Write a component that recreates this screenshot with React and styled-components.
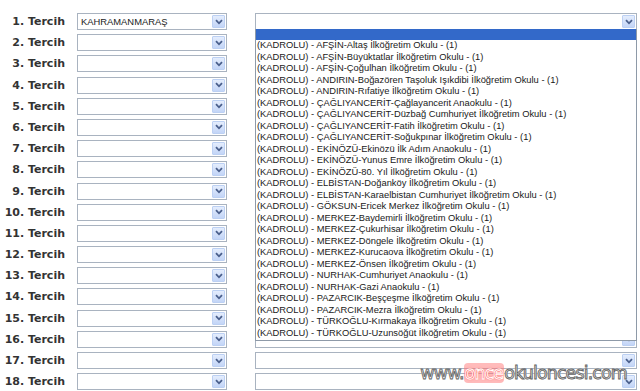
import React from 'react';
import styled, { createGlobalStyle } from 'styled-components';

const GlobalStyle = createGlobalStyle`
  html, body {
    margin: 0;
    padding: 0;
    background: #fff;
  }
  body {
    width: 640px;
    height: 391px;
    overflow: hidden;
    font-family: 'Liberation Sans', Arial, sans-serif;
  }
`;

const Page = styled.div`
  position: relative;
  width: 640px;
  height: 391px;
  padding-top: 13px;
  box-sizing: border-box;
`;

const Rows = styled.div`
  display: flex;
  flex-direction: column;
  gap: 4.2px;
`;

const Row = styled.div`
  display: flex;
  align-items: center;
  height: 17px;
`;

const Label = styled.div`
  width: 65px;
  text-align: right;
  font-family: 'DejaVu Sans', Verdana, sans-serif;
  font-weight: bold;
  font-size: 11px;
  color: #333;
  white-space: nowrap;
  margin-right: 12px;
`;

const SelectBox = styled.div`
  position: relative;
  box-sizing: border-box;
  width: ${props => props.width}px;
  height: 17px;
  margin-right: ${props => props.gap || 0}px;
  border: 1px solid #a9b3c0;
  background: #fff;
  display: flex;
  align-items: center;
  z-index: ${props => (props.open ? 5 : 1)};
`;

const SelectValue = styled.span`
  flex: 1;
  padding-left: 3px;
  font-size: 9.4px;
  color: #222;
  white-space: nowrap;
  overflow: hidden;
`;

const ArrowButton = styled.span`
  width: 13px;
  height: 13px;
  margin-right: 1px;
  box-sizing: border-box;
  border: 1px solid #bcd0f3;
  border-radius: 1px;
  background: linear-gradient(#e4edfd, #c3d5f7);
  display: flex;
  align-items: center;
  justify-content: center;
`;

const List = styled.div`
  position: absolute;
  left: -1px;
  right: -1px;
  top: 100%;
  box-sizing: border-box;
  border: 1px solid #8e9aa8;
  border-top: none;
  background: #fff;
  padding-bottom: 1px;
`;

const Option = styled.div`
  height: ${props => (props.selected ? 11 : 11.5)}px;
  line-height: ${props => (props.selected ? 11 : 11.5)}px;
  padding-left: 1px;
  font-size: 9.35px;
  color: ${props => (props.selected ? '#fff' : '#1a1a1a')};
  background: ${props => (props.selected ? '#3369c9' : 'transparent')};
  white-space: nowrap;
  overflow: hidden;
`;

const Watermark = styled.div`
  position: absolute;
  right: 13px;
  bottom: 8px;
  font-family: 'DejaVu Sans', Verdana, sans-serif;
  font-size: 17.5px;
  letter-spacing: -0.9px;
  color: #f4f4f4;
  -webkit-text-stroke: 0.9px #666;
  text-shadow: 0 0 2px #fff;
  z-index: 10;
`;

const Accent = styled.span`
  color: #ff3b3b;
  -webkit-text-stroke: 0.9px #fff;
  background: rgba(255, 120, 120, 0.5);
  border-radius: 4px;
  padding: 0 1px;
  text-shadow: 0 0 3px #ff6b6b;
`;

const Chevron = () => (
  <svg width="8" height="6" viewBox="0 0 8 6">
    <path d="M1 1.2 L4 4.3 L7 1.2" fill="none" stroke="#4a5f8c" strokeWidth="1.8" />
  </svg>
);

const Select = ({ width, gap, value, open, children }) => (
  <SelectBox width={width} gap={gap} open={open}>
    <SelectValue>{value}</SelectValue>
    <ArrowButton>
      <Chevron />
    </ArrowButton>
    {children}
  </SelectBox>
);

const schools = [
  'AFŞİN-Altaş İlköğretim Okulu',
  'AFŞİN-Büyüktatlar İlköğretim Okulu',
  'AFŞİN-Çoğulhan İlköğretim Okulu',
  'ANDIRIN-Boğazören Taşoluk Işıkdibi İlköğretim Okulu',
  'ANDIRIN-Rıfatiye İlköğretim Okulu',
  'ÇAĞLIYANCERİT-Çağlayancerit Anaokulu',
  'ÇAĞLIYANCERİT-Düzbağ Cumhuriyet İlköğretim Okulu',
  'ÇAĞLIYANCERİT-Fatih İlköğretim Okulu',
  'ÇAĞLIYANCERİT-Soğukpınar İlköğretim Okulu',
  'EKİNÖZÜ-Ekinözü İlk Adım Anaokulu',
  'EKİNÖZÜ-Yunus Emre İlköğretim Okulu',
  'EKİNÖZÜ-80. Yıl İlköğretim Okulu',
  'ELBİSTAN-Doğanköy İlköğretim Okulu',
  'ELBİSTAN-Karaelbistan Cumhuriyet İlköğretim Okulu',
  'GÖKSUN-Ericek Merkez İlköğretim Okulu',
  'MERKEZ-Baydemirli İlköğretim Okulu',
  'MERKEZ-Çukurhisar İlköğretim Okulu',
  'MERKEZ-Döngele İlköğretim Okulu',
  'MERKEZ-Kurucaova İlköğretim Okulu',
  'MERKEZ-Önsen İlköğretim Okulu',
  'NURHAK-Cumhuriyet Anaokulu',
  'NURHAK-Gazi Anaokulu',
  'PAZARCIK-Beşçeşme İlköğretim Okulu',
  'PAZARCIK-Mezra İlköğretim Okulu',
  'TÜRKOĞLU-Kırmakaya İlköğretim Okulu',
  'TÜRKOĞLU-Uzunsöğüt İlköğretim Okulu',
];

const rows = Array.from({ length: 18 }, (_, i) => i + 1);

const App = () => (
  <>
    <GlobalStyle />
    <Page>
      <Rows>
        {rows.map(n => (
          <Row key={n}>
            <Label>{n}. Tercih</Label>
            <Select width={150} gap={28} value={n === 1 ? 'KAHRAMANMARAŞ' : ''} />
            <Select width={382} open={n === 1}>
              {n === 1 && (
                <List>
                  <Option selected>&nbsp;</Option>
                  {schools.map(s => (
                    <Option key={s}>{`(KADROLU) - ${s} - (1)`}</Option>
                  ))}
                </List>
              )}
            </Select>
          </Row>
        ))}
      </Rows>
      <Watermark>
        www.<Accent>once</Accent>okuloncesi.com
      </Watermark>
    </Page>
  </>
);

export default App;
